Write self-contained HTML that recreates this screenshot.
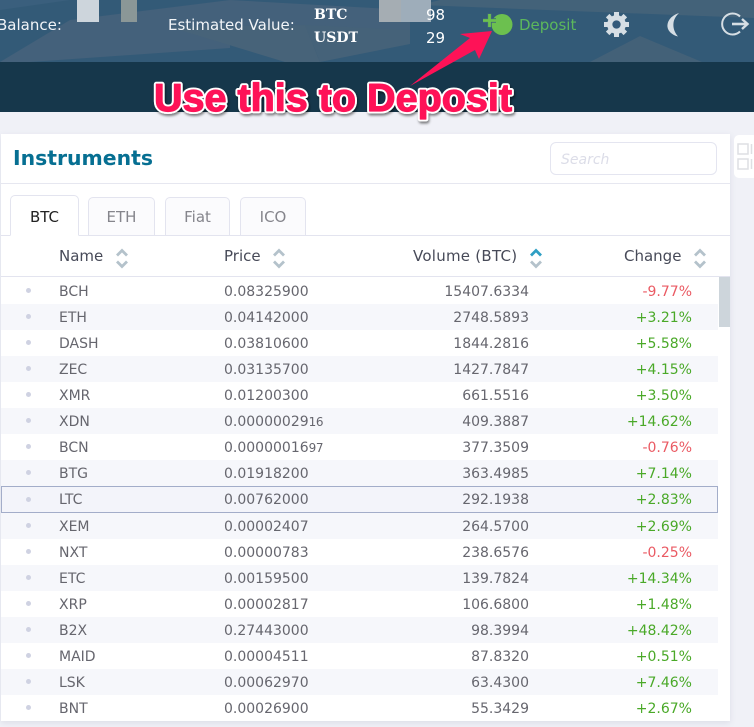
<!DOCTYPE html>
<html><head><meta charset="utf-8"><style>
html,body{margin:0;padding:0}
body{width:754px;height:727px;overflow:hidden;position:relative;background:#f0f1f7;font-family:"DejaVu Sans","Liberation Sans",sans-serif;font-size:14px;color:#66666e}
.a{position:absolute;white-space:nowrap}
.r{position:absolute;left:1px;width:717px;height:26px;line-height:29px}
.r.s{background:#f6f7fb}
.r i{position:absolute;left:25px;top:10px;width:5px;height:5px;border-radius:50%;background:#cfd2e2}
.r b,.r u,.r em,.r s{position:absolute;font-weight:normal;font-style:normal;text-decoration:none;white-space:nowrap}
.r b{left:58px}.r u{left:223px}.r em{right:189px}.r s{right:26px}
.g{color:#4aa928}.d{color:#ea5a63}
small{font-size:12px;letter-spacing:-.4px}
.tab{position:absolute;top:197px;height:38px;box-sizing:border-box;border:1px solid #e3e4ef;border-bottom:none;border-radius:5px 5px 0 0;background:#fbfbfd;color:#85858c;text-align:center;line-height:38px;font-size:15px}
.h{position:absolute;top:247px;color:#474a58;white-space:nowrap;font-size:15px}
.w{color:#f2f5f8;font-size:15px}
.bt{color:#fff;font:bold 14px "DejaVu Serif","Liberation Serif",serif;line-height:18px}
</style></head><body>
<svg class="a" style="left:0;top:0" width="754" height="62">
<rect width="754" height="62" fill="#335a77"/>
<polygon points="0,62 70,20 230,0 410,10 410,44 230,44 230,48 30,62" fill="#44617b"/>
<polygon points="70,0 0,10 0,0" fill="#3a5f7d"/>
<polygon points="420,5 440,0 754,0 754,18 520,9" fill="#436279"/>
<polygon points="170,27 285,62 320,62 305,25" fill="#476379"/>
<polygon points="305,25 410,30 410,44 320,62" fill="#456279"/>
<polygon points="640,36 702,62 590,62" fill="#436178"/>
<rect x="77" y="0" width="22" height="22" fill="#cdd5dc"/>
<rect x="121" y="0" width="16" height="22" fill="#8b9797"/>
<rect x="379" y="0" width="22" height="22" fill="#a5adb3"/>
<rect x="401" y="0" width="30" height="22" fill="#9eadba"/>
</svg>
<div class="a" style="left:0;top:62px;width:754px;height:50px;background:#16374b"></div>
<div class="a w" style="left:-3px;top:16px">Balance:</div>
<div class="a w" style="left:168px;top:16px">Estimated Value:</div>
<div class="a bt" style="left:314px;top:6px">BTC</div>
<div class="a bt" style="left:314px;top:29px;width:44px;overflow:hidden">USDT</div>
<div class="a" style="left:426px;top:6px;color:#fff;line-height:18px;font-size:15px">98</div>
<div class="a" style="left:426px;top:29px;color:#fff;line-height:18px;font-size:15px">29</div>
<div class="a" style="left:519px;top:16px;color:#5cb85c;font-size:15px">Deposit</div>
<svg class="a" style="left:480px;top:10px" width="36" height="28">
<circle cx="22" cy="14.500" r="10.500" fill="#6cc04f"/>
<path d="M3 10.500h13M9.500 3.500v14" stroke="#3f6878" stroke-width="4.500"/>
<path d="M3 10.500h13M9.500 4v13" stroke="#6cc04f" stroke-width="2.800"/>
</svg>
<svg class="a" style="left:604px;top:12px" width="25" height="25" viewBox="-12 -12 24 24">
<g fill="#d6dee4"><circle r="9"/>
<rect x="-2.400" y="-12" width="4.800" height="5"/><rect x="-2.400" y="7" width="4.800" height="5"/>
<rect x="-2.400" y="-12" width="4.800" height="5" transform="rotate(45)"/><rect x="-2.400" y="7" width="4.800" height="5" transform="rotate(45)"/>
<rect x="-2.400" y="-12" width="4.800" height="5" transform="rotate(90)"/><rect x="-2.400" y="7" width="4.800" height="5" transform="rotate(90)"/>
<rect x="-2.400" y="-12" width="4.800" height="5" transform="rotate(135)"/><rect x="-2.400" y="7" width="4.800" height="5" transform="rotate(135)"/>
</g><circle r="4" fill="#33597a"/></svg>
<svg class="a" style="left:664px;top:11px" width="20" height="27"><path d="M15 2C6 5 3 11 3.500 16C4 20 8 24 14 25.500C10 21 9 16 9.500 12C10 8 12 5 15 2Z" fill="#d6dee4"/></svg>
<svg class="a" style="left:720px;top:11px" width="34" height="26" fill="none" stroke="#d6dee4"><path d="M20 5.500A10.500 10.500 0 1 0 20 20.500" stroke-width="2"/><path d="M12 13H27" stroke-width="2.600"/><path d="M22 8L27.500 13L22 18" stroke-width="2.400"/></svg>

<div class="a" style="left:1px;top:134px;width:729px;height:587px;background:#fff;box-shadow:0 2px 6px rgba(90,95,130,.13)"></div>
<div class="a" style="left:13px;top:146px;font-size:20.400px;font-weight:bold;color:#066f92">Instruments</div>
<div class="a" style="left:550px;top:142px;width:167px;height:33px;box-sizing:border-box;border:1px solid #e4e5f0;border-radius:6px;background:#fff;color:#dcdde8;font-style:italic;font-size:14px;line-height:34px;padding-left:10px">Search</div>
<div class="a" style="left:1px;top:183px;width:729px;height:1px;background:#e6e7f0"></div>
<div class="a" style="left:1px;top:235px;width:729px;height:1px;background:#e3e4ef"></div>
<div class="a" style="left:1px;top:276px;width:729px;height:1px;background:#e3e4ef"></div>
<div class="tab" style="left:10px;top:195px;width:69px;height:41px;background:#fff;color:#222;line-height:42px;border-bottom:1px solid #fff">BTC</div>
<div class="tab" style="left:88px;width:67px">ETH</div>
<div class="tab" style="left:165px;width:65px">Fiat</div>
<div class="tab" style="left:240px;width:66px">ICO</div>

<div class="h" style="left:59px">Name</div>
<div class="h" style="left:224px">Price</div>
<div class="h" style="left:413px;letter-spacing:.25px">Volume (BTC)</div>
<div class="h" style="left:624px">Change</div>
<svg class="a" style="left:0;top:248px" width="730" height="22" fill="none" stroke-width="2.800" stroke="#b4c2cb">
<path d="M117 7.500L122 2.500L127 7.500M117 13.500L122 18.500L127 13.500"/>
<path d="M274 7.500L279 2.500L284 7.500M274 13.500L279 18.500L284 13.500"/>
<path d="M531 7.500L536 2.500L541 7.500" stroke="#2f9fc4"/><path d="M531 13.500L536 18.500L541 13.500"/>
<path d="M695 7.500L700 2.500L705 7.500M695 13.500L700 18.500L705 13.500"/>
</svg>

<div class="r" style="top:278px"><i></i><b>BCH</b><u>0.08325900</u><em>15407.6334</em><s class="d">-9.77%</s></div>
<div class="r s" style="top:304px"><i></i><b>ETH</b><u>0.04142000</u><em>2748.5893</em><s class="g">+3.21%</s></div>
<div class="r" style="top:330px"><i></i><b>DASH</b><u>0.03810600</u><em>1844.2816</em><s class="g">+5.58%</s></div>
<div class="r s" style="top:356px"><i></i><b>ZEC</b><u>0.03135700</u><em>1427.7847</em><s class="g">+4.15%</s></div>
<div class="r" style="top:382px"><i></i><b>XMR</b><u>0.01200300</u><em>661.5516</em><s class="g">+3.50%</s></div>
<div class="r s" style="top:408px"><i></i><b>XDN</b><u>0.000000<span>29</span><small>16</small></u><em>409.3887</em><s class="g">+14.62%</s></div>
<div class="r" style="top:434px"><i></i><b>BCN</b><u>0.000000<span>16</span><small>97</small></u><em>377.3509</em><s class="d">-0.76%</s></div>
<div class="r s" style="top:460px"><i></i><b>BTG</b><u>0.01918200</u><em>363.4985</em><s class="g">+7.14%</s></div>
<div class="r" style="top:486px;background:#f3f4fa;outline:1px solid #a3adc9;outline-offset:-1px;height:27px"><i style="top:11px"></i><b>LTC</b><u>0.00762000</u><em>292.1938</em><s class="g">+2.83%</s></div>
<div class="r s" style="top:513px"><i></i><b>XEM</b><u>0.00002407</u><em>264.5700</em><s class="g">+2.69%</s></div>
<div class="r" style="top:539px"><i></i><b>NXT</b><u>0.00000783</u><em>238.6576</em><s class="d">-0.25%</s></div>
<div class="r s" style="top:565px"><i></i><b>ETC</b><u>0.00159500</u><em>139.7824</em><s class="g">+14.34%</s></div>
<div class="r" style="top:591px"><i></i><b>XRP</b><u>0.00002817</u><em>106.6800</em><s class="g">+1.48%</s></div>
<div class="r s" style="top:617px"><i></i><b>B2X</b><u>0.27443000</u><em>98.3994</em><s class="g">+48.42%</s></div>
<div class="r" style="top:643px"><i></i><b>MAID</b><u>0.00004511</u><em>87.8320</em><s class="g">+0.51%</s></div>
<div class="r s" style="top:669px"><i></i><b>LSK</b><u>0.00062970</u><em>63.4300</em><s class="g">+7.46%</s></div>
<div class="r" style="top:695px"><i></i><b>BNT</b><u>0.00026900</u><em>55.3429</em><s class="g">+2.67%</s></div>
<div class="a" style="left:719px;top:277px;width:11px;height:50px;background:#cdd5db"></div>

<div class="a" style="left:734px;top:135px;width:24px;height:43px;background:#fff;border-radius:5px"></div>
<svg class="a" style="left:737px;top:143px" width="17" height="28" fill="none" stroke="#dedfe3" stroke-width="1.500"><rect x="1" y="1" width="10" height="10"/><rect x="1" y="16" width="10" height="10"/><path d="M14.500 1V11M14.500 16V26"/></svg>

<svg class="a" style="left:0;top:0;pointer-events:none" width="754" height="727">
<defs><filter id="f" x="-5%" y="-20%" width="110%" height="140%"><feDropShadow dx="1" dy="2" stdDeviation="1.200" flood-color="#000" flood-opacity=".5"/></filter></defs>
<polygon points="410,86 470,38 460,34 492,31 479,59 475,50" fill="#fe1257"/>
<g font-family="Liberation Sans" font-weight="bold" font-size="39" stroke-linejoin="round">
<text x="154" y="111" textLength="358" lengthAdjust="spacingAndGlyphs" fill="#fff" stroke="#fff" stroke-width="5" filter="url(#f)">Use this to Deposit</text>
<text x="154" y="111" textLength="358" lengthAdjust="spacingAndGlyphs" fill="#fe1257" stroke="#fe1257" stroke-width="1.200">Use this to Deposit</text>
</g>
</svg>
</body></html>
